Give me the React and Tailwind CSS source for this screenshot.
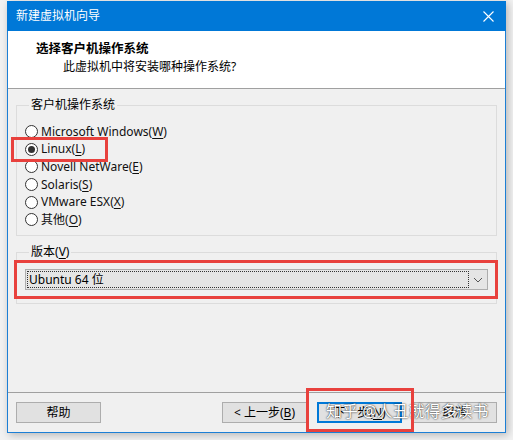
import React from 'react';

const FONT = { fontFamily: '"Segoe UI", "Noto Sans", "Noto Sans CJK SC", sans-serif' };

const OS_LIST = [
  { label: 'Microsoft Windows', key: 'W' },
  { label: 'Linux', key: 'L', checked: true },
  { label: 'Novell NetWare', key: 'E' },
  { label: 'Solaris', key: 'S' },
  { label: 'VMware ESX', key: 'X' },
  { label: '其他', key: 'O' },
];

const Radio = ({ checked }) => (
  <span className="flex h-[13px] w-[13px] shrink-0 items-center justify-center rounded-full border border-[#333] bg-white">
    {checked && <span className="h-[7px] w-[7px] rounded-full bg-[#333]" />}
  </span>
);

const Mnemonic = ({ label, k }) => (
  <span>
    {label}(<span className="underline underline-offset-2">{k}</span>)
  </span>
);

const Button = ({ children, primary }) => (
  <button
    type="button"
    className={`flex h-[21px] w-[85px] items-center justify-center bg-[#e1e1e1] text-[12px] text-black ${
      primary ? 'border-2 border-[#0078d7]' : 'border border-[#adadad]'
    }`}
  >
    {children}
  </button>
);

const App = () => {
  return (
    <div className="relative h-[440px] w-[513px] overflow-hidden bg-[#f2f2f2] pl-[7px] pt-[1px]" style={FONT}>
      <div className="relative flex h-[432px] w-[499px] flex-col border border-t-0 border-[#1c7fd5] bg-[#f0f0f0] shadow-[2px_2px_8px_rgba(0,0,0,0.25)]">
        {/* title bar */}
        <div className="-mx-px flex h-[30px] items-center justify-between bg-[#0078d7] pl-[9px] pr-[10px] text-[12px] text-white">
          <span>新建虚拟机向导</span>
          <svg width="11" height="11" viewBox="0 0 11 11" className="mr-[2px]">
            <path d="M0.5 0.5 L10.5 10.5 M10.5 0.5 L0.5 10.5" stroke="white" strokeWidth="1.1" />
          </svg>
        </div>

        {/* header */}
        <div className="h-[58px] border-b border-[#a0a0a0] bg-white pl-[28px] pt-[9px]">
          <div className="text-[12.5px] font-bold leading-[18px] text-black">选择客户机操作系统</div>
          <div className="pl-[27px] text-[12px] leading-[18px] text-black">此虚拟机中将安装哪种操作系统?</div>
        </div>

        {/* body */}
        <div className="flex-1 px-[8px] pt-[9px]">
          <fieldset className="h-[138px] border border-[#dcdcdc] pl-[8px]">
            <legend className="ml-[4px] px-[2px] text-[12px] leading-[14px] text-black">客户机操作系统</legend>
            <div className="flex flex-col pt-[11px]">
              {OS_LIST.map((os) => (
                <div key={os.key} className="flex h-[17.6px] items-center gap-[3px] text-[12px] text-[#111]">
                  <Radio checked={os.checked} />
                  <Mnemonic label={os.label} k={os.key} />
                </div>
              ))}
            </div>
          </fieldset>

          <fieldset className="mt-[9px] h-[59px] border border-[#dcdcdc] px-[8px]">
            <legend className="ml-[4px] px-[2px] text-[12px] leading-[14px] text-black">
              <Mnemonic label="版本" k="V" />
            </legend>
            <div className="mt-[10px] flex h-[21px] items-center border border-[#adadad] bg-[#e5e5e5] pl-[1px]">
              <div className="flex h-[17px] flex-1 items-center border border-dotted border-[#333] pl-[1px] text-[12px] text-black">
                Ubuntu 64 位
              </div>
              <svg width="18" height="17" viewBox="0 0 18 17">
                <path d="M5 7 L9 11 L13 7" stroke="#555" strokeWidth="1" fill="none" />
              </svg>
            </div>
          </fieldset>
        </div>

        {/* footer */}
        <div className="relative h-[40px] border-t border-[#a0a0a0] pl-[8px] pr-[8px] pt-[9px]">
          <div className="flex items-center">
            <Button>帮助</Button>
            <div className="ml-auto flex gap-[10px]">
              <Button>&lt; 上一步(<span className="underline underline-offset-2">B</span>)</Button>
              <Button primary>下一步(<span className="underline underline-offset-2">N</span>)</Button>
              <Button>取消</Button>
            </div>
          </div>
          <div className="pointer-events-none absolute left-[318px] top-[6px] text-[16px] text-white [text-shadow:0_0_2px_rgba(0,0,0,0.7),0_0_1px_rgba(0,0,0,0.6)]">
            知乎 @人丑就得多读书
          </div>
        </div>

        {/* annotations */}
        <div className="pointer-events-none absolute left-[3px] top-[136px] h-[25px] w-[97px] border-[3px] border-[#e8413d]" />
        <div className="pointer-events-none absolute left-[6px] top-[259px] h-[39px] w-[484px] border-[3px] border-[#e8413d]" />
        <div className="pointer-events-none absolute left-[298px] top-[387px] h-[44px] w-[108px] border-[3px] border-[#e8413d]" />
      </div>
    </div>
  );
};

export default App;
